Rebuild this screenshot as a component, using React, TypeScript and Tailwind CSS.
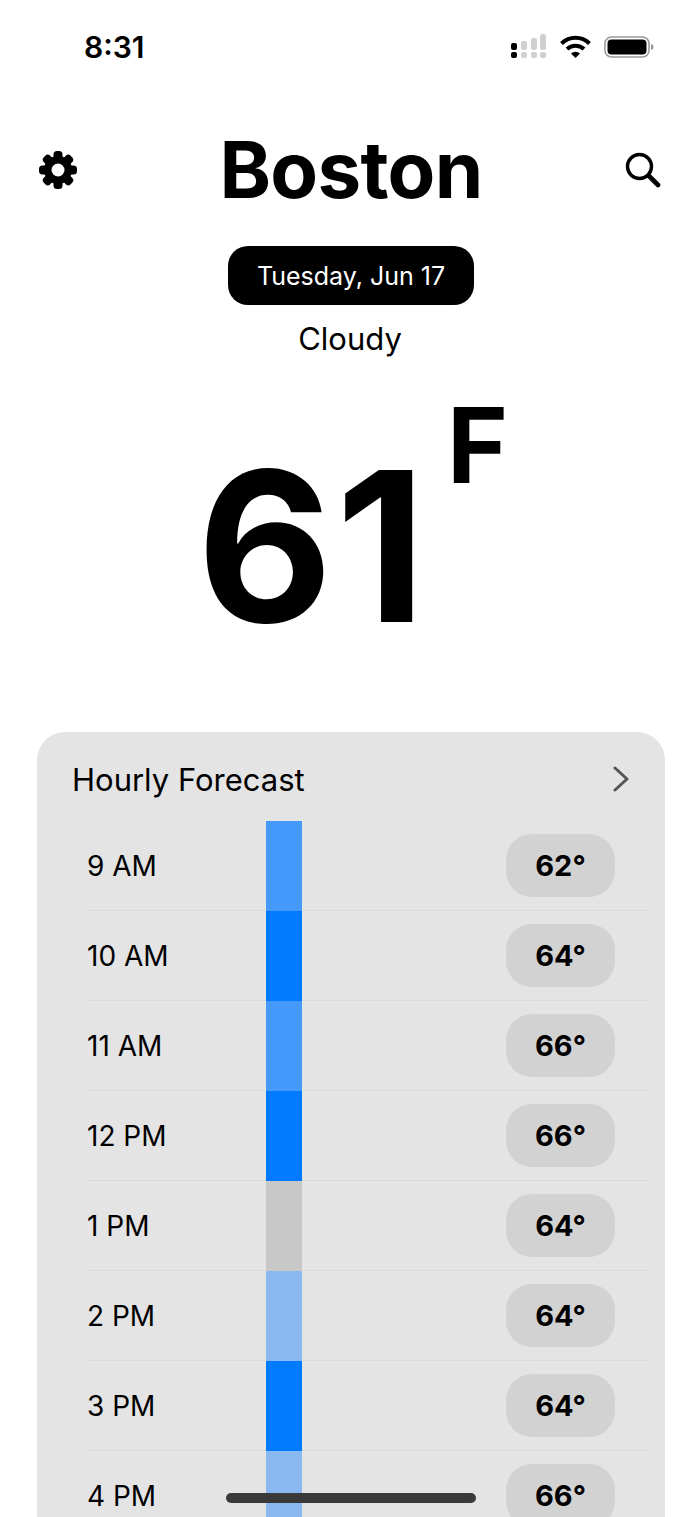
const hours = [
  { time: "9 AM", temp: "62°", bar: "bg-[#4499fa]" },
  { time: "10 AM", temp: "64°", bar: "bg-[#007aff]" },
  { time: "11 AM", temp: "66°", bar: "bg-[#4499fa]" },
  { time: "12 PM", temp: "66°", bar: "bg-[#007aff]" },
  { time: "1 PM", temp: "64°", bar: "bg-[#c8c8c8]" },
  { time: "2 PM", temp: "64°", bar: "bg-[#8ab8f0]" },
  { time: "3 PM", temp: "64°", bar: "bg-[#007aff]" },
  { time: "4 PM", temp: "66°", bar: "bg-[#8ab8f0]" },
];

function StatusIcons() {
  return (
    <div className="flex items-center">
      <svg width="36" height="26" viewBox="0 0 36 26">
        <rect x="0" y="9" width="6" height="7" rx="2" fill="#000" />
        <rect x="0" y="18" width="6" height="6" rx="2" fill="#000" />
        <rect x="10" y="7" width="6" height="9" rx="2" fill="#d0d0d0" />
        <rect x="10" y="18" width="6" height="6" rx="2" fill="#d0d0d0" />
        <rect x="20" y="4" width="6" height="12" rx="2" fill="#d0d0d0" />
        <rect x="20" y="18" width="6" height="6" rx="2" fill="#d0d0d0" />
        <rect x="29" y="0" width="6" height="16" rx="2" fill="#d0d0d0" />
        <rect x="29" y="18" width="6" height="6" rx="2" fill="#d0d0d0" />
      </svg>
      <svg className="ml-[13px]" width="31" height="24" viewBox="0 0 31 24">
        <path d="M1.5 8.5 A20 20 0 0 1 29.5 8.5" fill="none" stroke="#000" strokeWidth="4" />
        <path d="M7 14 A12.5 12.5 0 0 1 24 14" fill="none" stroke="#000" strokeWidth="4" />
        <path d="M11 18.5 A6.5 6.5 0 0 1 20 18.5 L15.5 23 Z" fill="#000" />
      </svg>
      <svg className="ml-[13px]" width="50" height="24" viewBox="0 0 50 24">
        <rect x="1" y="2" width="44" height="20" rx="6.5" fill="none" stroke="#9a9a9a" strokeWidth="1.6" />
        <rect x="3.5" y="4.5" width="39" height="15" rx="4" fill="#000" />
        <path d="M47 9 C49 9.5 49.5 10.5 49.5 12 C49.5 13.5 49 14.5 47 15 Z" fill="#9a9a9a" />
      </svg>
    </div>
  );
}

function Gear() {
  return (
    <svg width="38" height="38" viewBox="0 0 38 38">
      <g fill="#000">
        {[0, 45, 90, 135, 180, 225, 270, 315].map((deg) => (
          <rect key={deg} x="14.5" y="0" width="9" height="12" rx="3.5" transform={`rotate(${deg} 19 19)`} />
        ))}
      </g>
      <circle cx="19" cy="19" r="14" fill="#000" />
      <circle cx="19" cy="19" r="6.5" fill="#fff" />
    </svg>
  );
}

function Search() {
  return (
    <svg width="36" height="36" viewBox="0 0 36 36" fill="none" stroke="#000" strokeLinecap="round">
      <circle cx="14.5" cy="14.5" r="12" strokeWidth="3.4" />
      <path d="M24 24 L33 33" strokeWidth="4.6" />
    </svg>
  );
}

export default function App() {
  return (
    <div className="relative h-[1517px] w-[700px] overflow-hidden bg-white font-['Inter',sans-serif] text-black">
      <div className="flex h-[94px] items-center justify-between pl-[84px] pr-[46px]">
        <span className="text-[30px] font-semibold leading-none">8:31</span>
        <StatusIcons />
      </div>

      <div className="flex h-[152px] items-center justify-between px-[39px]">
        <Gear />
        <h1 className="text-[78px] font-bold leading-none tracking-[-0.7px]">Boston</h1>
        <Search />
      </div>

      <div className="flex flex-col items-center">
        <div className="ml-[2px] flex h-[59px] w-[246px] items-center justify-center rounded-[20px] bg-black pt-[2px] text-[25px] font-[430] text-white">
          Tuesday, Jun 17
        </div>
        <p className="mt-[15px] text-[31px] font-[430] leading-[38px]">Cloudy</p>
        <div className="ml-[5px] mt-[30px] flex h-[342px] items-start">
          <span className="mt-[33px] text-[209px] font-bold leading-[250px] tracking-[3px]">61</span>
          <span className="ml-[18px] mt-[2px] text-[104px] font-bold leading-[110px]">F</span>
        </div>
      </div>

      <section className="ml-[37px] mt-[2px] h-[850px] w-[628px] rounded-[28px] bg-[#e4e4e4]">
        <div className="flex h-[89px] items-center justify-between pl-[35px] pr-[35px] pt-[5px]">
          <h2 className="text-[31px] font-[430] leading-none">Hourly Forecast</h2>
          <svg width="18" height="26" viewBox="0 0 18 26" fill="none" stroke="#555" strokeWidth="3" strokeLinecap="round" strokeLinejoin="round">
            <path d="M3 2 L15 13 L3 24" />
          </svg>
        </div>
        <div className="pl-[50px] pr-[15px]">
          {hours.map((h) => (
            <div key={h.time} className="flex h-[90px] items-center border-b border-[#dadada]">
              <span className="w-[179px] pt-[1px] text-[28px] font-[430]">{h.time}</span>
              <div className={`h-[90px] w-[36px] ${h.bar}`} />
              <div className="ml-[204px] flex h-[63px] w-[109px] items-center justify-center rounded-[26px] bg-[#d2d2d2] text-[29px] font-bold">
                {h.temp}
              </div>
            </div>
          ))}
        </div>
      </section>

      <div className="absolute bottom-[14px] left-[226px] h-[10px] w-[250px] rounded-full bg-[#3a3a3a]" />
    </div>
  );
}
